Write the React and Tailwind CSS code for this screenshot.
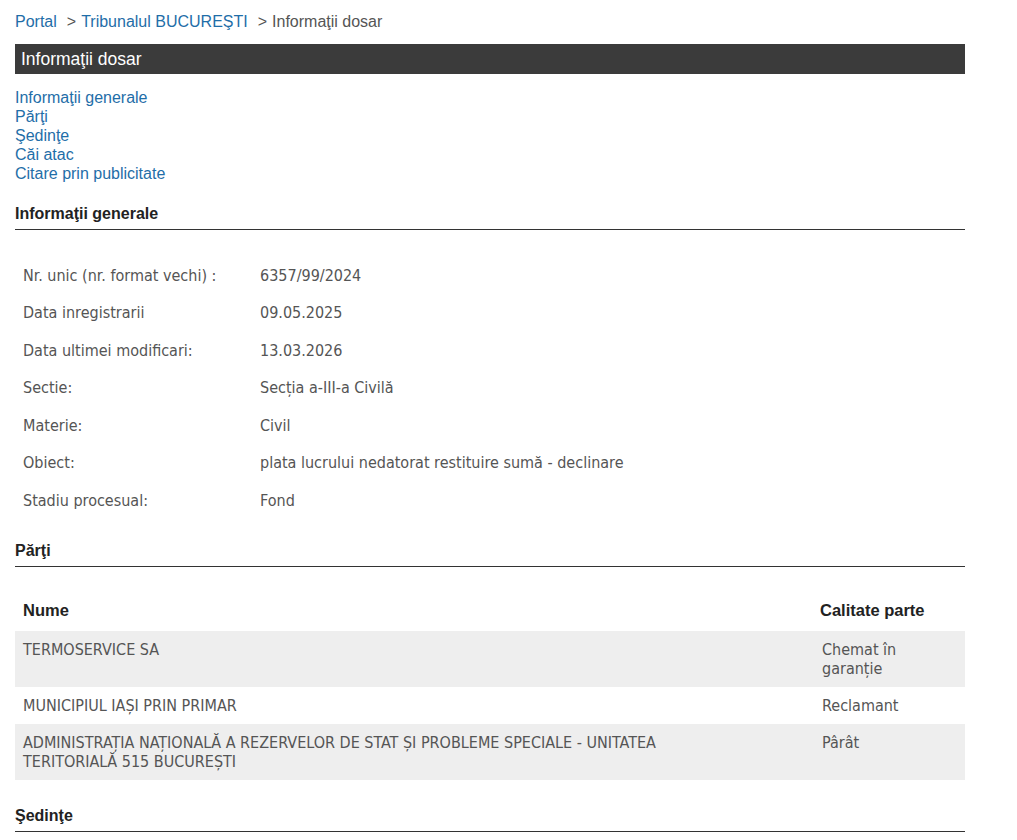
const info = [
  ['Nr. unic (nr. format vechi) :', '6357/99/2024'],
  ['Data inregistrarii', '09.05.2025'],
  ['Data ultimei modificari:', '13.03.2026'],
  ['Sectie:', 'Secția a-III-a Civilă'],
  ['Materie:', 'Civil'],
  ['Obiect:', 'plata lucrului nedatorat restituire sumă - declinare'],
  ['Stadiu procesual:', 'Fond'],
]

const parti = [
  ['TERMOSERVICE SA', 'Chemat în garanție'],
  ['MUNICIPIUL IAȘI PRIN PRIMAR', 'Reclamant'],
  ['ADMINISTRAȚIA NAȚIONALĂ A REZERVELOR DE STAT ȘI PROBLEME SPECIALE - UNITATEA TERITORIALĂ 515 BUCUREȘTI', 'Pârât'],
]

const tahoma = "font-['DejaVu_Sans_Condensed',sans-serif]"

function SectionTitle({ children }) {
  return (
    <div className="border-b border-[#333] pb-[6px] text-[16px] font-bold leading-[18px] text-[#222]">
      {children}
    </div>
  )
}

export default function App() {
  return (
    <div className="min-h-screen bg-white font-['Liberation_Sans',Arial,sans-serif]">
      <div className="ml-[15px] w-[950px] pt-[12px]">
        <div className="flex items-center text-[16px] leading-[20px]">
          <a className="text-[#1f6ea8]">Portal</a>
          <span className="ml-[10px] text-[#555]">&gt;</span>
          <a className="ml-[5px] text-[#1f6ea8]">Tribunalul BUCUREŞTI</a>
          <span className="ml-[10px] text-[#555]">&gt;</span>
          <span className="ml-[5px] text-[#555]">Informaţii dosar</span>
        </div>

        <div className="mt-[12px] flex h-[30px] items-center bg-[#3b3b3b] px-[6px] text-[17.5px] text-white">
          Informaţii dosar
        </div>

        <div className="mt-[14px] flex flex-col text-[16px] leading-[19px] text-[#1f6ea8]">
          <a>Informaţii generale</a>
          <a>Părţi</a>
          <a>Şedinţe</a>
          <a>Căi atac</a>
          <a>Citare prin publicitate</a>
        </div>

        <div className="mt-[22px]">
          <SectionTitle>Informaţii generale</SectionTitle>
        </div>

        <table className={`mt-[27px] text-[16px] text-[#555] ${tahoma}`}>
          <tbody>
            {info.map(([k, v]) => (
              <tr key={k} className="h-[37.5px]">
                <td className="w-[245px] pl-[8px] align-middle">{k}</td>
                <td className="align-middle">{v}</td>
              </tr>
            ))}
          </tbody>
        </table>

        <div className="mt-[22px]">
          <SectionTitle>Părţi</SectionTitle>
        </div>

        <table className={`mt-[24px] w-full text-[16px] ${tahoma}`}>
          <thead>
            <tr className="h-[40px] text-left text-[16.5px] text-[#222] font-['Liberation_Sans',Arial,sans-serif]">
              <th className="pl-[8px] align-middle font-bold">Nume</th>
              <th className="w-[145px] align-middle font-bold">Calitate parte</th>
            </tr>
          </thead>
          <tbody className="text-[#555]">
            {parti.map(([n, c], i) => (
              <tr key={n} className={i % 2 === 0 ? 'bg-[#eeeeee]' : 'bg-white'}>
                <td className="py-[9px] pl-[8px] pr-[110px] align-top leading-[19px]">{n}</td>
                <td className="py-[9px] pl-[2px] pr-[20px] align-top leading-[19px]">{c}</td>
              </tr>
            ))}
          </tbody>
        </table>

        <div className="mt-[27px]">
          <SectionTitle>Şedinţe</SectionTitle>
        </div>
      </div>
    </div>
  )
}
